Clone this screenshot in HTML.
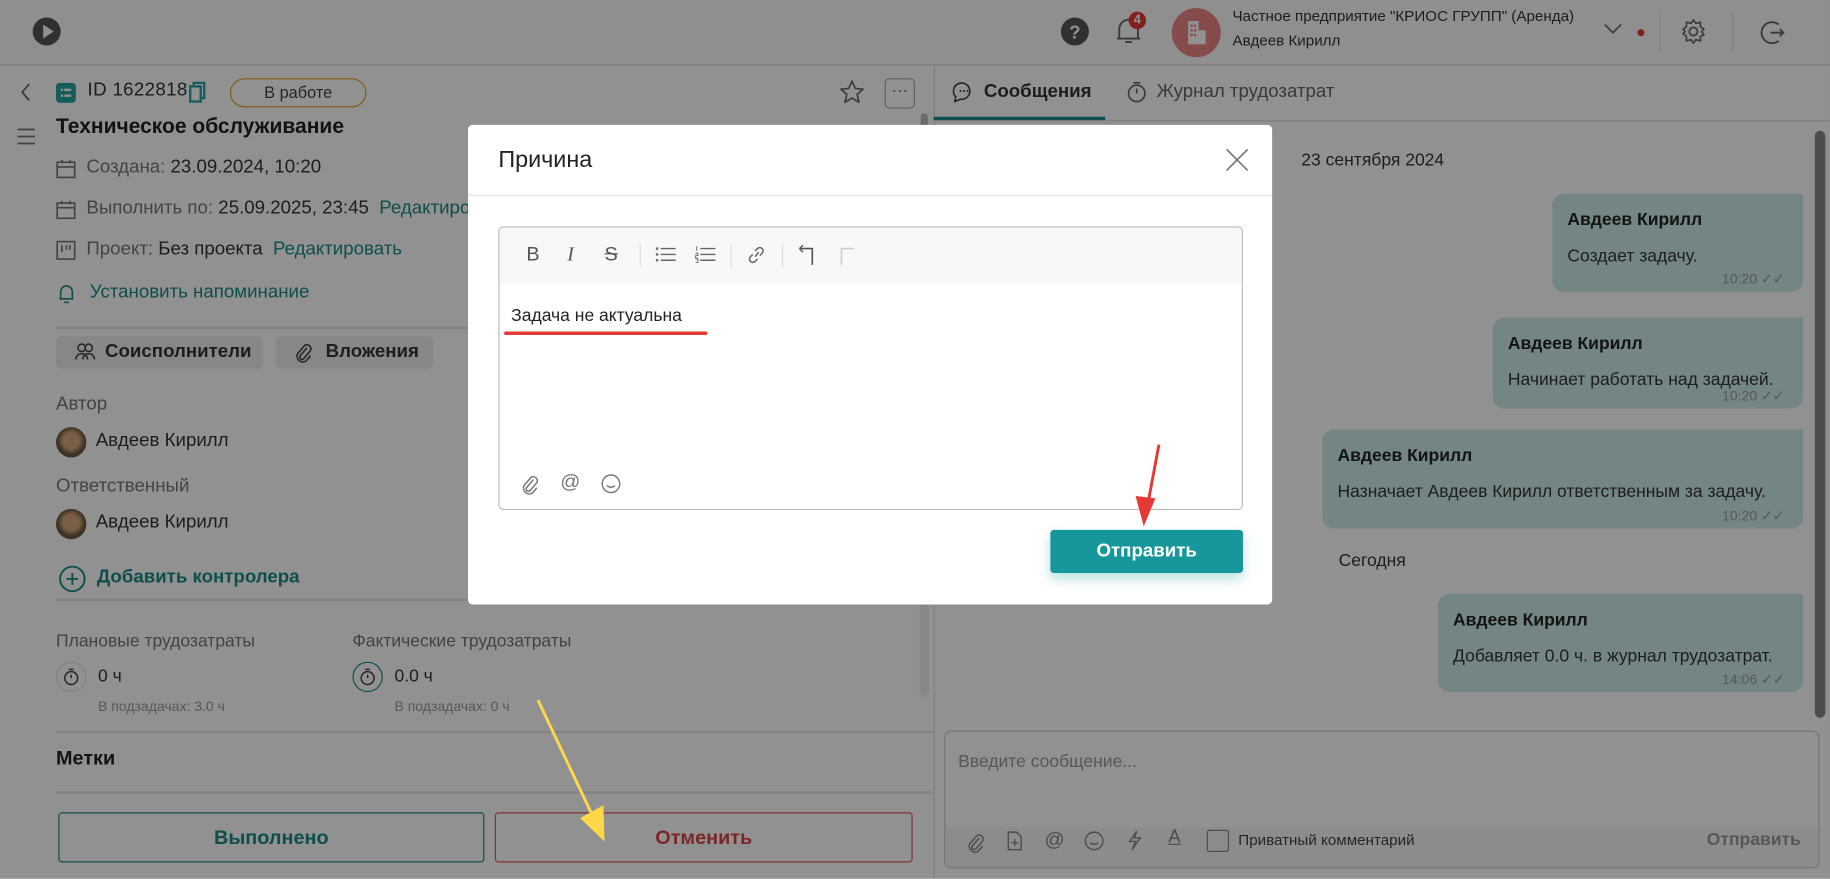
<!DOCTYPE html>
<html><head><meta charset="utf-8">
<style>
html,body{margin:0;padding:0;width:1830px;height:879px;overflow:hidden;background:#fff;}
#w{position:absolute;left:0;top:0;width:1568px;height:753px;transform:scale(1.16709);transform-origin:0 0;font-family:"Liberation Sans",sans-serif;color:#333;background:#fff;overflow:hidden;}
.a{position:absolute;white-space:nowrap;}
.t{color:#1a8a8c;}
.g{color:#777;}
.hr{position:absolute;height:2px;background:#e6e6e6;}
.btn{position:absolute;background:#eee;border-radius:4px;font-weight:bold;font-size:16px;line-height:28px;}
.bub{position:absolute;background:#cdeaea;border-radius:10px 0 10px 10px;}
.bub .n{position:absolute;left:13px;top:14px;font-size:15px;font-weight:bold;color:#222;}
.bub .m{position:absolute;left:13px;top:45px;font-size:15px;color:#333;}
.bub .tm{position:absolute;right:16px;bottom:4px;font-size:12px;color:#999;}
.ov{position:absolute;left:0;top:0;width:1568px;height:753px;background:rgba(0,0,0,0.43);}
svg{position:absolute;overflow:visible;}
</style></head><body><div id="w">
<!-- top bar -->
<div class="a" style="left:0;top:0;width:1568px;height:55px;background:#fbfbfb;border-bottom:1px solid #ddd;"></div>
<svg style="left:28px;top:15px" width="24" height="24"><circle cx="12" cy="12" r="12" fill="#555"/><path d="M9 6 L18 12 L9 18Z" fill="#fbfbfb"/></svg>
<svg style="left:909px;top:15px" width="24" height="24"><circle cx="12" cy="12" r="12" fill="#555"/><text x="12" y="18" font-size="16" font-weight="bold" fill="#fff" text-anchor="middle" font-family="Liberation Sans">?</text></svg>
<svg style="left:955px;top:13px" width="24" height="28"><path d="M4 20 V12 a8 8 0 0 1 16 0 V20 H2 H22 M9 23 h6" fill="none" stroke="#666" stroke-width="1.6"/></svg>
<div class="a" style="left:967px;top:10px;width:15px;height:15px;border-radius:8px;background:#e53935;color:#fff;font-size:11px;font-weight:bold;text-align:center;line-height:15px;">4</div>
<div class="a" style="left:1004px;top:7px;width:42px;height:42px;border-radius:21px;background:#ec8585;"></div>
<svg style="left:1016px;top:17px" width="18" height="22"><rect x="2" y="1" width="9" height="20" fill="#fff"/><rect x="11" y="9" width="6" height="12" fill="#fff"/><g fill="#ec8585"><rect x="4" y="4" width="2" height="2"/><rect x="7" y="4" width="2" height="2"/><rect x="4" y="8" width="2" height="2"/><rect x="7" y="8" width="2" height="2"/><rect x="4" y="12" width="2" height="2"/><rect x="7" y="12" width="2" height="2"/></g></svg>
<div class="a" style="left:1056px;top:6px;font-size:13px;color:#333;">Частное предприятие "КРИОС ГРУПП" (Аренда)</div>
<div class="a" style="left:1056px;top:27px;font-size:13px;color:#333;">Авдеев Кирилл</div>
<svg style="left:1374px;top:20px" width="16" height="10"><path d="M1 1 L8 8 L15 1" fill="none" stroke="#666" stroke-width="1.4"/></svg>
<div class="a" style="left:1403px;top:25px;width:6px;height:6px;border-radius:3px;background:#e53935;"></div>
<div class="a" style="left:1422px;top:12px;width:1px;height:32px;background:#ddd;"></div>
<div class="a" style="left:1484px;top:12px;width:1px;height:32px;background:#ddd;"></div>
<svg style="left:1440px;top:15px" width="22" height="24"><circle cx="11" cy="12" r="3.5" fill="none" stroke="#666" stroke-width="1.5"/><path d="M11 2 L13 5 L17 4 L17 8 L20 10 L18 12 L20 15 L17 16 L17 20 L13 19 L11 22 L9 19 L5 20 L5 16 L2 14 L4 12 L2 10 L5 8 L5 4 L9 5Z" fill="none" stroke="#666" stroke-width="1.4" stroke-linejoin="round"/></svg>
<svg style="left:1507px;top:16px" width="24" height="24"><path d="M17 5 A9 9 0 1 0 17 19" fill="none" stroke="#666" stroke-width="1.6"/><path d="M10 12 H21 M18 9 L21 12 L18 15" fill="none" stroke="#666" stroke-width="1.6"/></svg>

<!-- left panel -->
<div class="a" style="left:800px;top:56px;width:1px;height:697px;background:#ddd;"></div>
<svg style="left:17px;top:71px" width="10" height="16"><path d="M8 1 L2 8 L8 15" fill="none" stroke="#666" stroke-width="1.5"/></svg>
<svg style="left:14px;top:109px" width="17" height="16"><path d="M1 2 H16 M1 8 H16 M1 14 H16" stroke="#777" stroke-width="1.5"/></svg>
<div class="a" style="left:48px;top:71px;width:17px;height:17px;border-radius:3px;background:#26a2a4;"></div>
<svg style="left:48px;top:71px" width="17" height="17"><g fill="#fff"><rect x="4" y="5" width="2" height="2"/><rect x="7" y="5" width="6" height="2"/><rect x="4" y="10" width="2" height="2"/><rect x="7" y="10" width="6" height="2"/></g></svg>
<div class="a" style="left:75px;top:69px;font-size:16px;color:#333;letter-spacing:0.3px;">ID 1622818</div>
<svg style="left:162px;top:70px" width="14" height="18"><rect x="1" y="4" width="9" height="13" fill="none" stroke="#26a2a4" stroke-width="2"/><path d="M4 3 V1 H13 V14 H11" fill="none" stroke="#26a2a4" stroke-width="2"/></svg>
<div class="a" style="left:197px;top:67px;width:115px;height:23px;border:1.5px solid #e8a020;border-radius:13px;font-size:14px;text-align:center;line-height:23px;color:#444;">В работе</div>
<svg style="left:719px;top:68px" width="22" height="22"><path d="M11 1.5 L13.8 7.8 L20.5 8.4 L15.4 12.9 L17 19.6 L11 16 L5 19.6 L6.6 12.9 L1.5 8.4 L8.2 7.8Z" fill="none" stroke="#666" stroke-width="1.4" stroke-linejoin="round"/></svg>
<div class="a" style="left:758px;top:67px;width:24px;height:24px;border:1px solid #aaa;border-radius:4px;font-size:14px;text-align:center;line-height:18px;color:#666;">···</div>
<div class="a" style="left:48px;top:98px;font-size:18px;font-weight:bold;color:#222;">Техническое обслуживание</div>
<svg style="left:48px;top:136px" width="17" height="17"><rect x="1" y="3" width="15" height="13" fill="none" stroke="#777" stroke-width="1.4"/><path d="M1 7 H16 M5 1 V4 M12 1 V4" stroke="#777" stroke-width="1.4"/></svg>
<div class="a" style="left:74px;top:135px;font-size:16px;"><span class="g">Создана:</span> 23.09.2024, 10:20</div>
<svg style="left:48px;top:171px" width="17" height="17"><rect x="1" y="3" width="15" height="13" fill="none" stroke="#777" stroke-width="1.4"/><path d="M1 7 H16 M5 1 V4 M12 1 V4" stroke="#777" stroke-width="1.4"/></svg>
<div class="a" style="left:74px;top:170px;font-size:16px;"><span class="g">Выполнить по:</span> 25.09.2025, 23:45 &nbsp;<span class="t">Редактировать</span></div>
<svg style="left:48px;top:206px" width="17" height="17"><rect x="1" y="1" width="15" height="15" fill="none" stroke="#777" stroke-width="1.4"/><path d="M5 4 V10 M9 4 V8 M12 4 V8" stroke="#777" stroke-width="1.4"/></svg>
<div class="a" style="left:74px;top:205px;font-size:16px;"><span class="g">Проект:</span> Без проекта &nbsp;<span class="t">Редактировать</span></div>
<svg style="left:50px;top:242px" width="14" height="19"><path d="M2 14 V8 a5 5 0 0 1 10 0 V14 H1 H13 M5 17 h4" fill="none" stroke="#1a8a8c" stroke-width="1.4"/></svg>
<div class="a t" style="left:77px;top:242px;font-size:16px;">Установить напоминание</div>
<div class="hr" style="left:48px;top:280px;width:752px;"></div>
<div class="btn" style="left:48px;top:288px;width:177px;"><span style="margin-left:42px;">Соисполнители</span></div>
<svg style="left:64px;top:293px" width="18" height="16"><circle cx="6" cy="5" r="3.2" fill="none" stroke="#444" stroke-width="1.3"/><circle cx="12" cy="5" r="3.2" fill="none" stroke="#444" stroke-width="1.3"/><path d="M1 15 a5 5 0 0 1 10 0 M7 15 a5 5 0 0 1 10 0" fill="none" stroke="#444" stroke-width="1.3"/></svg>
<div class="btn" style="left:236px;top:288px;width:135px;"><span style="margin-left:43px;">Вложения</span></div>
<svg style="left:252px;top:293px" width="16" height="18"><path d="M11 5 L5 12 A2 2 0 0 0 8 14.5 L14 7.5 A3.5 3.5 0 0 0 9 3 L3 10 A5 5 0 0 0 10 16.5 L14 12" fill="none" stroke="#444" stroke-width="1.4"/></svg>
<div class="btn" style="left:382px;top:288px;width:30px;"></div>
<div class="a g" style="left:48px;top:338px;font-size:16px;">Автор</div>
<div class="a" style="left:48px;top:366px;width:26px;height:26px;border-radius:13px;background:radial-gradient(circle at 50% 45%,#d9a57c 0 35%,#6b5a40 60%);"></div>
<div class="a" style="left:82px;top:369px;font-size:16px;">Авдеев Кирилл</div>
<div class="a g" style="left:48px;top:408px;font-size:16px;">Ответственный</div>
<div class="a" style="left:48px;top:436px;width:26px;height:26px;border-radius:13px;background:radial-gradient(circle at 50% 45%,#d9a57c 0 35%,#6b5a40 60%);"></div>
<div class="a" style="left:82px;top:439px;font-size:16px;">Авдеев Кирилл</div>
<svg style="left:50px;top:484px" width="24" height="24"><circle cx="12" cy="12" r="10.5" fill="none" stroke="#1a8a8c" stroke-width="1.6"/><path d="M12 7 V17 M7 12 H17" stroke="#1a8a8c" stroke-width="1.6"/></svg>
<div class="a t" style="left:83px;top:486px;font-size:16px;font-weight:bold;">Добавить контролера</div>
<div class="hr" style="left:48px;top:513px;width:752px;"></div>
<div class="a g" style="left:48px;top:541px;font-size:15px;">Плановые трудозатраты</div>
<div class="a g" style="left:302px;top:541px;font-size:15px;">Фактические трудозатраты</div>
<div class="a" style="left:48px;top:567px;width:24px;height:24px;border-radius:13px;border:1.5px solid #e3e3e3;"></div>
<svg style="left:54px;top:572px" width="14" height="16"><circle cx="7" cy="9" r="5.5" fill="none" stroke="#444" stroke-width="1.3"/><path d="M5 1.5 H9 M7 6 V9" stroke="#444" stroke-width="1.3"/></svg>
<div class="a" style="left:84px;top:571px;font-size:15px;">0 ч</div>
<div class="a" style="left:302px;top:567px;width:24px;height:24px;border-radius:13px;border:1.5px solid #1a8a8c;"></div>
<svg style="left:308px;top:572px" width="14" height="16"><circle cx="7" cy="9" r="5.5" fill="none" stroke="#444" stroke-width="1.3"/><path d="M5 1.5 H9 M7 6 V9" stroke="#444" stroke-width="1.3"/></svg>
<div class="a" style="left:338px;top:571px;font-size:15px;">0.0 ч</div>
<div class="a" style="left:84px;top:598px;font-size:12px;color:#999;">В подзадачах: 3.0 ч</div>
<div class="a" style="left:338px;top:598px;font-size:12px;color:#999;">В подзадачах: 0 ч</div>
<div class="hr" style="left:48px;top:626px;width:752px;"></div>
<div class="a" style="left:48px;top:640px;font-size:17px;font-weight:bold;color:#222;">Метки</div>
<div class="hr" style="left:48px;top:678px;width:752px;"></div>
<div class="a t" style="left:50px;top:696px;width:363px;height:41px;border:1px solid #1a8a8c;border-radius:3px;text-align:center;line-height:41px;font-size:17px;font-weight:bold;">Выполнено</div>
<div class="a" style="left:424px;top:696px;width:356px;height:41px;border:1px solid #e05555;border-radius:3px;text-align:center;line-height:41px;font-size:17px;font-weight:bold;color:#d84545;">Отменить</div>
<div class="a" style="left:788px;top:97px;width:8px;height:500px;border-radius:4px;background:#f0f0f0;"></div>
<div class="a" style="left:789px;top:97px;width:6px;height:12px;border-radius:3px;background:#bbb;"></div>

<!-- right panel -->
<svg style="left:816px;top:70px" width="18" height="18"><path d="M3 13 A7 7 0 1 1 7 15 L2 17Z" fill="none" stroke="#444" stroke-width="1.4" stroke-linejoin="round"/><circle cx="7" cy="8" r=".9" fill="#444"/><circle cx="10" cy="8" r=".9" fill="#444"/><circle cx="13" cy="8" r=".9" fill="#444"/></svg>
<div class="a" style="left:843px;top:70px;font-size:16px;font-weight:bold;color:#333;">Сообщения</div>
<div class="a" style="left:800px;top:100px;width:147px;height:3px;background:#1a8a8c;"></div>
<svg style="left:966px;top:69px" width="16" height="20"><circle cx="8" cy="11" r="7" fill="none" stroke="#666" stroke-width="1.4"/><path d="M5 2 H11 M8 7 V11" stroke="#666" stroke-width="1.4"/></svg>
<div class="a" style="left:991px;top:70px;font-size:16px;color:#666;">Журнал трудозатрат</div>
<div class="a" style="left:801px;top:103px;width:767px;height:1px;background:#ddd;"></div>
<div class="a" style="left:1115px;top:129px;font-size:15px;">23 сентября 2024</div>
<div class="bub" style="left:1330px;top:166px;width:215px;height:84px;"><div class="n">Авдеев Кирилл</div><div class="m">Создает задачу.</div><div class="tm">10:20 ✓✓</div></div>
<div class="bub" style="left:1279px;top:272px;width:266px;height:78px;"><div class="n">Авдеев Кирилл</div><div class="m">Начинает работать над задачей.</div><div class="tm">10:20 ✓✓</div></div>
<div class="bub" style="left:1133px;top:368px;width:412px;height:85px;"><div class="n">Авдеев Кирилл</div><div class="m">Назначает Авдеев Кирилл ответственным за задачу.</div><div class="tm">10:20 ✓✓</div></div>
<div class="a" style="left:1147px;top:472px;font-size:15px;">Сегодня</div>
<div class="bub" style="left:1232px;top:509px;width:313px;height:84px;"><div class="n">Авдеев Кирилл</div><div class="m">Добавляет 0.0 ч. в журнал трудозатрат.</div><div class="tm">14:06 ✓✓</div></div>
<div class="a" style="left:1555px;top:112px;width:9px;height:503px;border-radius:5px;background:#888;"></div>
<div class="a" style="left:809px;top:626px;width:748px;height:116px;border:1px solid #ccc;border-radius:6px;background:#fff;overflow:hidden;">
 <div class="a" style="left:0;top:82px;width:748px;height:34px;background:#f6f6f6;"></div>
 <div class="a" style="left:11px;top:17px;font-size:15px;color:#999;">Введите сообщение...</div>
 <svg style="left:18px;top:86px" width="16" height="18"><path d="M11 5 L5 12 A2 2 0 0 0 8 14.5 L14 7.5 A3.5 3.5 0 0 0 9 3 L3 10 A5 5 0 0 0 10 16.5 L14 12" fill="none" stroke="#888" stroke-width="1.3"/></svg>
 <svg style="left:53px;top:85px" width="13" height="17"><path d="M1 1 H8 L12 5 V16 H1Z M6.5 7 V13 M3.5 10 H9.5" fill="none" stroke="#888" stroke-width="1.2"/></svg>
 <div class="a" style="left:85px;top:83px;font-size:17px;color:#888;">@</div>
 <svg style="left:119px;top:85px" width="17" height="17"><circle cx="8.5" cy="8.5" r="7.5" fill="none" stroke="#888" stroke-width="1.2"/><path d="M5 10 Q8.5 13 12 10" fill="none" stroke="#888" stroke-width="1.2"/></svg>
 <svg style="left:155px;top:84px" width="14" height="18"><path d="M9 1 L3 10 H8 L5 17 L12 7 H7 Z" fill="none" stroke="#888" stroke-width="1.2"/></svg>
 <div class="a" style="left:191px;top:82px;font-size:16px;color:#888;text-decoration:underline;">A</div>
 <div class="a" style="left:224px;top:84px;width:17px;height:17px;border:1px solid #888;border-radius:2px;"></div>
 <div class="a" style="left:251px;top:85px;font-size:13px;color:#444;">Приватный комментарий</div>
 <div class="a" style="right:15px;top:84px;font-size:15px;font-weight:bold;color:#999;">Отправить</div>
</div>

<div class="ov"></div>

<!-- modal -->
<div class="a" style="left:401px;top:107px;width:689px;height:411px;background:#fff;border-radius:4px;">
 <div class="a" style="left:26px;top:19px;font-size:20px;color:#222;">Причина</div>
 <svg style="left:649px;top:20px" width="20" height="20"><path d="M1 1 L19 19 M19 1 L1 19" stroke="#777" stroke-width="1.4"/></svg>
 <div class="a" style="left:0;top:60px;width:689px;height:1px;background:#e5e5e5;"></div>
 <div class="a" style="left:26px;top:87px;width:636px;height:241px;border:1px solid #bbb;border-radius:4px;overflow:hidden;">
  <div class="a" style="left:0;top:0;width:636px;height:48px;background:#f8f8f8;"></div>
  <div class="a" style="left:23px;top:13px;font-size:17px;color:#555;">B</div>
  <div class="a" style="left:58px;top:13px;font-size:17px;color:#555;font-style:italic;font-family:'Liberation Serif',serif;">I</div>
  <div class="a" style="left:90px;top:13px;font-size:17px;color:#555;text-decoration:line-through;">S</div>
  <div class="a" style="left:120px;top:14px;width:1px;height:20px;background:#ddd;"></div>
  <svg style="left:134px;top:16px" width="17" height="14"><g fill="#666"><rect x="0" y="1" width="2" height="2"/><rect x="0" y="6" width="2" height="2"/><rect x="0" y="11" width="2" height="2"/></g><path d="M4 2H17 M4 7H17 M4 12H17" stroke="#666" stroke-width="1.2"/></svg>
  <svg style="left:168px;top:16px" width="17" height="14"><path d="M1 0V4 M0 6H2V8H0V10H2 M0 11H2V14H0" stroke="#666" stroke-width=".8" fill="none"/><path d="M4 2H17 M4 7H17 M4 12H17" stroke="#666" stroke-width="1.2"/></svg>
  <div class="a" style="left:198px;top:14px;width:1px;height:20px;background:#ddd;"></div>
  <svg style="left:212px;top:15px" width="16" height="17"><path d="M7 10 L10 6 M5 8 L3 10 A2.5 2.5 0 0 0 7 14 L9 12 M11 9 L13 7 A2.5 2.5 0 0 0 9 3 L7 5" fill="none" stroke="#666" stroke-width="1.3"/></svg>
  <div class="a" style="left:242px;top:14px;width:1px;height:20px;background:#ddd;"></div>
  <svg style="left:256px;top:17px" width="14" height="16"><path d="M1 1 H12 V15" fill="none" stroke="#555" stroke-width="1.4"/><path d="M1 1 L4 -2 M1 1 L4 4" stroke="#555" stroke-width="1.2"/></svg>
  <svg style="left:291px;top:17px" width="14" height="16"><path d="M13 1 H2 V15" fill="none" stroke="#ccc" stroke-width="1.4"/></svg>
  <div class="a" style="left:10px;top:67px;font-size:15px;color:#222;">Задача не актуальна</div>
  <div class="a" style="left:4px;top:89px;width:174px;height:3px;background:#e53935;border-radius:1px;"></div>
  <svg style="left:18px;top:211px" width="16" height="18"><path d="M11 5 L5 12 A2 2 0 0 0 8 14.5 L14 7.5 A3.5 3.5 0 0 0 9 3 L3 10 A5 5 0 0 0 10 16.5 L14 12" fill="none" stroke="#777" stroke-width="1.3"/></svg>
  <div class="a" style="left:52px;top:208px;font-size:17px;color:#777;">@</div>
  <svg style="left:87px;top:211px" width="17" height="17"><circle cx="8.5" cy="8.5" r="7.5" fill="none" stroke="#777" stroke-width="1.2"/><path d="M5 10 Q8.5 13 12 10" fill="none" stroke="#777" stroke-width="1.2"/></svg>
 </div>
 <div class="a" style="left:499px;top:347px;width:165px;height:37px;background:#17979b;border-radius:3px;color:#fff;font-size:16px;font-weight:bold;text-align:center;line-height:37px;box-shadow:0 5px 10px rgba(23,151,155,0.3);">Отправить</div>
</div>

<!-- arrows -->
<svg style="left:0;top:0" width="1568" height="753">
 <path d="M993 381 L982 440" stroke="#e53935" stroke-width="2.5"/>
 <path d="M973 425 L980 451 L990 427Z" fill="#e53935"/>
 <path d="M461 600 L512 708" stroke="#ffd84a" stroke-width="2.5"/>
 <path d="M497 701 L518 721 L517 690Z" fill="#ffd84a"/>
</svg>
</div></body></html>
